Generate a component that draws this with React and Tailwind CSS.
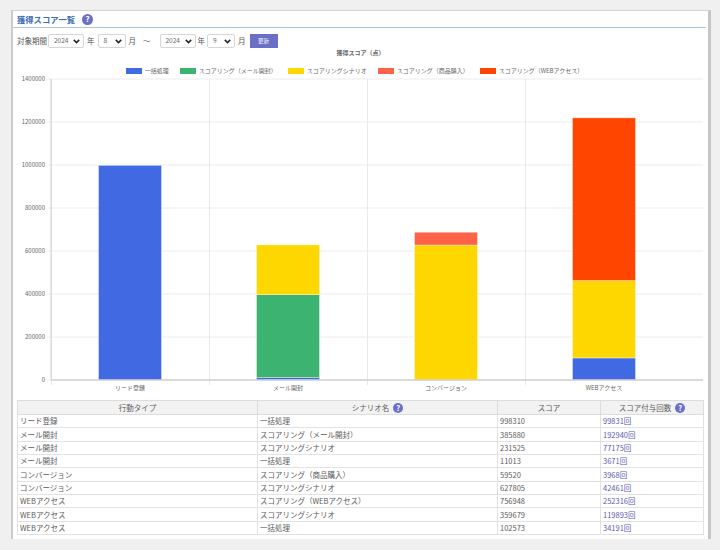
import React from "react";

const FONT = { fontFamily: '"Noto Sans CJK JP", "Noto Sans", sans-serif' };

const SERIES = [
  { name: "一括処理", color: "#4169e1" },
  { name: "スコアリング（メール開封）", color: "#3cb371" },
  { name: "スコアリングシナリオ", color: "#ffd700" },
  { name: "スコアリング（商品購入）", color: "#ff6347" },
  { name: "スコアリング（WEBアクセス）", color: "#ff4500" },
];

// values per category, same order as SERIES
const CATEGORIES = [
  { label: "リード登録", values: [998310, 0, 0, 0, 0] },
  { label: "メール開封", values: [11013, 385880, 231525, 0, 0] },
  { label: "コンバージョン", values: [0, 0, 627805, 59520, 0] },
  { label: "WEBアクセス", values: [102573, 0, 359679, 0, 756948] },
];

const ROWS = [
  ["リード登録", "一括処理", "998310", "99831回"],
  ["メール開封", "スコアリング（メール開封）", "385880", "192940回"],
  ["メール開封", "スコアリングシナリオ", "231525", "77175回"],
  ["メール開封", "一括処理", "11013", "3671回"],
  ["コンバージョン", "スコアリング（商品購入）", "59520", "3968回"],
  ["コンバージョン", "スコアリングシナリオ", "627805", "42461回"],
  ["WEBアクセス", "スコアリング（WEBアクセス）", "756948", "252316回"],
  ["WEBアクセス", "スコアリングシナリオ", "359679", "119893回"],
  ["WEBアクセス", "一括処理", "102573", "34191回"],
];

function Help({ big }) {
  return (
    <span
      className={`${big ? "w-[11px] h-[11px] text-[8px]" : "w-[10px] h-[10px] text-[7.5px]"} shrink-0 rounded-full bg-[#6b6fc6] text-white font-bold leading-none flex items-center justify-center`}
    >
      ?
    </span>
  );
}

function FakeSelect({ value, w }) {
  return (
    <div className={`${w} h-[14px] flex items-center justify-between pl-[5px] pr-[3px] bg-white border border-[#d6d6d6] rounded-[2px] text-[6.5px] text-[#666]`}>
      <span>{value}</span>
      <svg width="7" height="5" viewBox="0 0 7 5">
        <path d="M0.8 0.9 L3.5 3.6 L6.2 0.9" fill="none" stroke="#222" strokeWidth="1.5" />
      </svg>
    </div>
  );
}

function Chart() {
  const bottom = 305;
  const top = 4;
  const left = 38;
  const right = 690;
  const max = 1400000;
  const y = (v) => bottom - (v * (bottom - top)) / max;
  const step = 158;
  const ticks = [0, 200000, 400000, 600000, 800000, 1000000, 1200000, 1400000];

  return (
    <svg width="692" height="320" viewBox="0 0 692 320" style={FONT}>
      {ticks.map((t) => (
        <g key={t}>
          <line x1={left - 4} x2={right} y1={y(t)} y2={y(t)} stroke="#ececec" strokeWidth="1" />
          <text x={left - 6} y={y(t) + 2} textAnchor="end" fontSize="6" fill="#666">{t}</text>
        </g>
      ))}
      {[0, 1, 2, 3].map((i) => (
        <line key={i} x1={left + i * step + 0.5} x2={left + i * step + 0.5} y1={top} y2={bottom + 5} stroke="#e9e9e9" strokeWidth="1" />
      ))}
      {CATEGORIES.map((c, i) => {
        const cx = left + i * step + step / 2;
        let acc = 0;
        return (
          <g key={c.label}>
            {c.values.map((v, s) => {
              if (!v) return null;
              const y0 = y(acc);
              acc += v;
              const y1 = y(acc);
              return (
                <rect key={s} x={cx - 31.5} y={y1} width="63" height={y0 - y1} fill={SERIES[s].color} stroke="#ffffff" strokeOpacity="0.6" strokeWidth="0.6" />
              );
            })}
            <text x={cx} y={bottom + 10} textAnchor="middle" fontSize="6" fill="#666">{c.label}</text>
          </g>
        );
      })}
      <line x1={left} x2={left} y1={top} y2={bottom} stroke="#d0d0d0" strokeWidth="1" />
      <line x1={left} x2={right} y1={bottom} y2={bottom} stroke="#d0d0d0" strokeWidth="1.5" />
    </svg>
  );
}

export default function App() {
  return (
    <div className="w-[720px] h-[550px] bg-[#f0f0f0] pt-[10px] pl-[11px] overflow-hidden" style={FONT}>
      <div className="w-[700px] h-[529px] bg-white border-t border-t-[#d2d2d2] border-l-2 border-l-[#cbcbcb] border-r-[3px] border-r-[#c6c6c6]">
        {/* heading */}
        <div className="h-[17px] mr-[2px] pl-[4px] flex items-center gap-[7px] border-b border-[#a9c6e6]">
          <span className="text-[8.3px] font-bold text-[#3a6db5]">獲得スコア一覧</span>
          <Help big />
        </div>

        {/* period selector */}
        <div className="mt-[6px] h-[14px] pl-[4px] flex items-center text-[7.5px] text-[#555]">
          <span>対象期間</span>
          <div className="ml-[1px]"><FakeSelect value="2024" w="w-[36px]" /></div>
          <span className="ml-[3px]">年</span>
          <div className="ml-[3px]"><FakeSelect value="8" w="w-[28px]" /></div>
          <span className="ml-[3px]">月</span>
          <span className="ml-[7px]">〜</span>
          <div className="ml-[9px]"><FakeSelect value="2024" w="w-[36px]" /></div>
          <span className="ml-[2px]">年</span>
          <div className="ml-[2px]"><FakeSelect value="9" w="w-[28px]" /></div>
          <span className="ml-[3px]">月</span>
          <button className="ml-[4px] w-[28px] h-[14px] bg-[#6b6fc6] text-white text-[5.5px] flex items-center justify-center">更新</button>
        </div>

        {/* chart */}
        <div className="h-[9px] text-center text-[6px] font-bold text-[#666] leading-[9px]">獲得スコア（点）</div>
        <div className="mt-[10px] h-[8px] flex justify-center items-center gap-[11px] pr-[12px] text-[6px] text-[#666] leading-none">
          {SERIES.map((s) => (
            <div key={s.name} className="flex items-center gap-[3px]">
              <span className="w-[16px] h-[6px] inline-block" style={{ backgroundColor: s.color }} />
              <span>{s.name}</span>
            </div>
          ))}
        </div>
        <Chart />

        {/* table */}
        <table className="ml-[4px] mt-[5px] w-[686px] border-collapse text-[7.5px] text-[#5c5c5c] table-fixed">
          <colgroup>
            <col className="w-[240px]" />
            <col className="w-[240px]" />
            <col className="w-[103px]" />
            <col className="w-[103px]" />
          </colgroup>
          <thead>
            <tr className="h-[14px] bg-[#f2f2f2]">
              <th className="border border-[#dcdcdc] font-normal">行動タイプ</th>
              <th className="border border-[#dcdcdc] font-normal">
                <div className="flex items-center justify-center gap-[4px]">シナリオ名<Help /></div>
              </th>
              <th className="border border-[#dcdcdc] font-normal">スコア</th>
              <th className="border border-[#dcdcdc] font-normal">
                <div className="flex items-center justify-center gap-[4px]">スコア付与回数<Help /></div>
              </th>
            </tr>
          </thead>
          <tbody>
            {ROWS.map((r, i) => (
              <tr key={i} className="h-[13.33px]">
                <td className="border border-[#e2e2e2] pl-[2px] leading-none">{r[0]}</td>
                <td className="border border-[#e2e2e2] pl-[2px] leading-none">{r[1]}</td>
                <td className="border border-[#e2e2e2] pl-[2px] leading-none">{r[2]}</td>
                <td className="border border-[#e2e2e2] pl-[2px] leading-none text-[#5b5bb0]">{r[3]}</td>
              </tr>
            ))}
          </tbody>
        </table>
      </div>
    </div>
  );
}
